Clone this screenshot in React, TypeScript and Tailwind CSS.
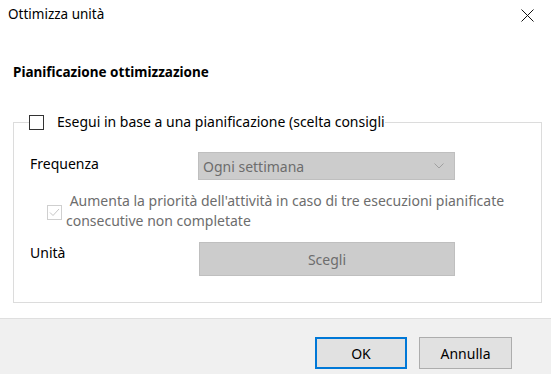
export default function App() {
  return (
    <div
      className="w-[551px] h-[374px] bg-white flex flex-col text-black overflow-hidden"
      style={{ fontFamily: '"Segoe UI", "Noto Sans", sans-serif' }}
    >
      {/* Title bar */}
      <div className="h-[32px] flex items-center justify-between pl-[8px] pr-[17px] shrink-0">
        <span className="text-[13.5px] leading-none -mt-[2px]">Ottimizza unità</span>
        <svg width="13" height="13" viewBox="0 0 13 13" className="-mt-[2px]">
          <path d="M0.5 0.5 L12.5 12.5 M12.5 0.5 L0.5 12.5" stroke="#111" strokeWidth="1" />
        </svg>
      </div>

      {/* Body */}
      <div className="flex-1 flex flex-col px-[13px] pt-[29px]">
        <h2 className="text-[13.5px] font-bold leading-[22px]">Pianificazione ottimizzazione</h2>

        <fieldset className="mt-[29px] w-[529px] h-[191px] border border-[#dcdcdc]">
          <legend className="ml-[15px] whitespace-nowrap flex items-center">
            <span className="w-[15px] h-[15px] border border-[#333] bg-white shrink-0" />
            <span className="ml-[13px] text-[14px] leading-[20px]">
              Esegui in base a una pianificazione (scelta consigli
            </span>
          </legend>

          <div className="flex items-center pl-[16px] mt-[20px]">
            <span className="w-[168px] text-[14px] leading-[20px] -mt-[4px]">Frequenza</span>
            <div className="w-[257px] h-[28px] bg-[#cccccc] border border-[#bfbfbf] flex items-center justify-between pl-[4px] pr-[10px]">
              <span className="text-[14px] text-[#6d6d6d]">Ogni settimana</span>
              <svg width="10" height="6" viewBox="0 0 10 6">
                <path d="M0.5 0.5 L5 5 L9.5 0.5" fill="none" stroke="#a0a0a0" strokeWidth="1" />
              </svg>
            </div>
          </div>

          <div className="flex items-start pl-[33px] mt-[11px]">
            <span className="w-[15px] h-[15px] border border-[#cfcfcf] mt-[14px] shrink-0 flex items-center justify-center">
              <svg width="11" height="9" viewBox="0 0 11 9">
                <path d="M1 4.5 L4 7.5 L10 1" fill="none" stroke="#c6c6c6" strokeWidth="1" />
              </svg>
            </span>
            <span className="ml-[4px] w-[460px] text-[14px] leading-[20px] text-[#6d6d6d]">
              &nbsp;Aumenta la priorità dell'attività in caso di tre esecuzioni pianificate consecutive non completate
            </span>
          </div>

          <div className="flex items-start pl-[16px] mt-[11px]">
            <span className="w-[169px] text-[14px] leading-[20px] mt-[1px]">Unità</span>
            <div className="w-[256px] h-[34px] bg-[#cccccc] border border-[#bfbfbf] flex items-center justify-center">
              <span className="text-[14px] text-[#6d6d6d]">Scegli</span>
            </div>
          </div>
        </fieldset>
      </div>

      {/* Footer */}
      <div className="h-[56px] shrink-0 bg-[#f0f0f0] border-t border-[#dfdfdf] flex justify-end items-start pt-[18px] pr-[39px] gap-[12px]">
        <button className="w-[92px] h-[32px] bg-[#e1e1e1] border-2 border-[#0078d7] text-[14px]">OK</button>
        <button className="w-[93px] h-[32px] bg-[#e1e1e1] border border-[#adadad] text-[14px]">Annulla</button>
      </div>
    </div>
  );
}
